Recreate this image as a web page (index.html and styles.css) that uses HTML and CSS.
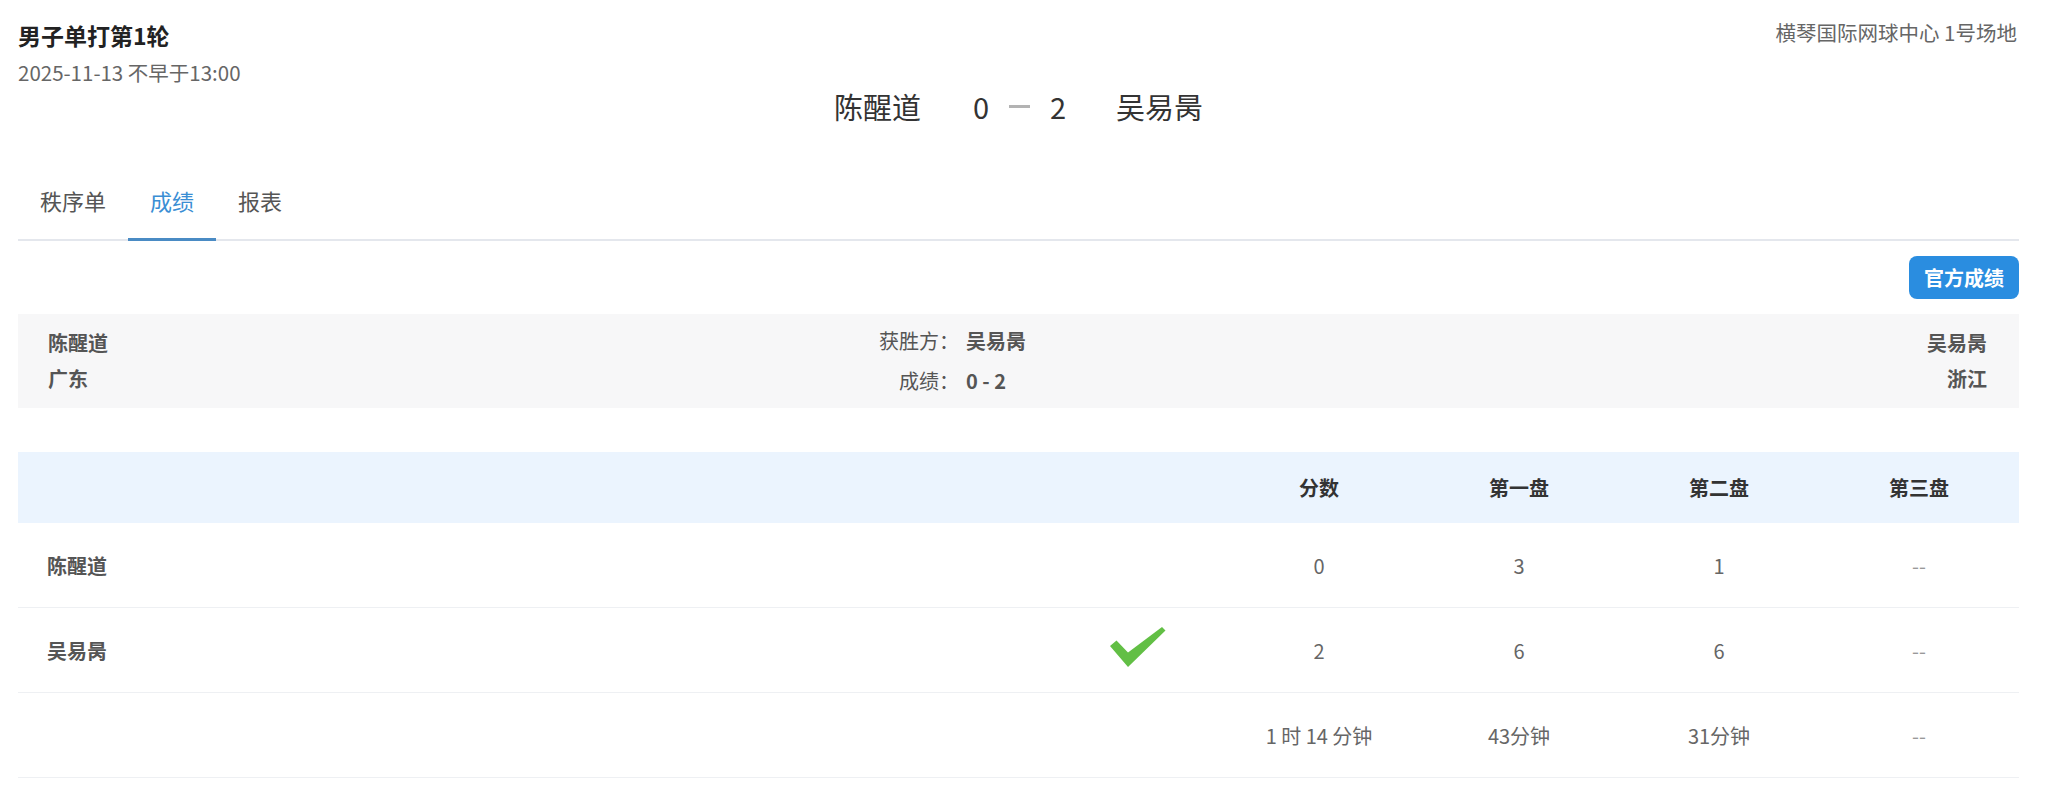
FILE: index.html
```html
<!DOCTYPE html>
<html lang="zh-CN">
<head>
<meta charset="utf-8">
<title>男子单打第1轮</title>
<link rel="stylesheet" href="styles.css">
</head>
<body>
<div class="page">
  <header class="match-head">
    <div class="head-top">
      <div class="head-left">
        <h1 class="title">男子单打第1轮</h1>
        <div class="date">2025-11-13 不早于13:00</div>
      </div>
      <div class="venue">横琴国际网球中心 1号场地</div>
    </div>
    <div class="scoreline">
      <span class="player">陈醒道</span>
      <span class="score">0</span>
      <span class="dash"></span>
      <span class="score">2</span>
      <span class="player">吴易昺</span>
    </div>
  </header>

  <nav class="tabs">
    <div class="tab">秩序单</div>
    <div class="tab active">成绩</div>
    <div class="tab">报表</div>
  </nav>

  <div class="toolbar">
    <button class="btn-primary">官方成绩</button>
  </div>

  <section class="info">
    <div class="side left">
      <div>陈醒道</div>
      <div>广东</div>
    </div>
    <div class="middle">
      <span class="label">获胜方：</span><span class="value">吴易昺</span>
      <span class="label">成绩：</span><span class="value">0 - 2</span>
    </div>
    <div class="side right">
      <div>吴易昺</div>
      <div>浙江</div>
    </div>
  </section>

  <section class="table">
    <div class="tr thead">
      <div class="td name"></div>
      <div class="td check"></div>
      <div class="td">分数</div>
      <div class="td">第一盘</div>
      <div class="td">第二盘</div>
      <div class="td">第三盘</div>
    </div>
    <div class="tr">
      <div class="td name">陈醒道</div>
      <div class="td check"></div>
      <div class="td">0</div>
      <div class="td">3</div>
      <div class="td">1</div>
      <div class="td empty">--</div>
    </div>
    <div class="tr">
      <div class="td name">吴易昺</div>
      <div class="td check">
        <svg class="check-icon" width="57" height="42" viewBox="0 0 57 42" aria-hidden="true">
          <path d="M1 20 L7.5 14.5 L19 26.5 L53 1 L56.5 4.5 L19 41 Z" fill="#62bf45"/>
        </svg>
      </div>
      <div class="td">2</div>
      <div class="td">6</div>
      <div class="td">6</div>
      <div class="td empty">--</div>
    </div>
    <div class="tr">
      <div class="td name"></div>
      <div class="td check"></div>
      <div class="td">1 时 14 分钟</div>
      <div class="td">43分钟</div>
      <div class="td">31分钟</div>
      <div class="td empty">--</div>
    </div>
  </section>
</div>
</body>
</html>
```

FILE: styles.css
```css
* {
  box-sizing: border-box;
}

html, body {
  margin: 0;
  padding: 0;
  background: #ffffff;
}

body {
  font-family: "Noto Sans CJK SC", "Noto Sans", sans-serif;
  font-size: 20px;
  color: #333333;
}

.page {
  padding: 20px 29px 0 18px;
}

/* header */
.head-top {
  display: flex;
  justify-content: space-between;
  align-items: flex-start;
}

.title {
  margin: 0;
  font-size: 23px;
  line-height: 30px;
  font-weight: 700;
  color: #222222;
}

.date {
  margin-top: 8px;
  font-size: 20.5px;
  line-height: 28px;
  color: #666666;
}

.venue {
  font-size: 20.5px;
  line-height: 24px;
  color: #666666;
  padding-right: 2px;
}

.scoreline {
  display: flex;
  justify-content: center;
  align-items: center;
  height: 40px;
  font-size: 29px;
  line-height: 40px;
  color: #333333;
}

.scoreline .player:first-child {
  margin-right: 52px;
}

.scoreline .player:last-child {
  margin-left: 50px;
}

.scoreline .dash {
  display: block;
  width: 21px;
  height: 3px;
  margin: 0 20px;
  background: #b3b3b3;
}

/* tabs */
.tabs {
  display: flex;
  align-items: flex-start;
  margin-top: 49px;
  border-bottom: 2px solid #e4e7ed;
}

.tab {
  padding: 0 22px 14px;
  font-size: 22px;
  line-height: 50px;
  color: #555555;
}

.tab.active {
  color: #3a8ed4;
  padding-bottom: 13px;
  border-bottom: 3px solid #4a8bc4;
  margin-bottom: -2px;
}

/* toolbar */
.toolbar {
  display: flex;
  justify-content: flex-end;
  margin-top: 15px;
}

.btn-primary {
  height: 43px;
  padding: 0 15px;
  border: none;
  border-radius: 8px;
  background: #2a8de0;
  color: #ffffff;
  font-family: inherit;
  font-size: 20px;
  font-weight: 700;
  line-height: 43px;
}

/* info box */
.info {
  display: grid;
  grid-template-columns: 831px auto 1fr;
  align-items: center;
  height: 94px;
  margin-top: 15px;
  padding: 0 32px 0 30px;
  background: #f7f7f8;
  color: #555555;
}

.side {
  font-weight: 700;
  line-height: 36px;
}

.side.right {
  text-align: right;
}

.middle {
  display: grid;
  grid-template-columns: auto auto;
  line-height: 40px;
}

.middle .label {
  text-align: right;
  color: #555555;
}

.middle .value {
  margin-left: 7px;
  font-weight: 700;
}

/* score table */
.table {
  margin-top: 44px;
}

.tr {
  display: grid;
  grid-template-columns: 1fr 160px 200px 200px 200px 200px;
  align-items: center;
  height: 85px;
  border-bottom: 1px solid #eef0f3;
  color: #666666;
}

.tr.thead {
  height: 71px;
  background: #ebf4fe;
  border-bottom: none;
  color: #333333;
  font-weight: 700;
}

.td {
  text-align: center;
}

.td.name {
  text-align: left;
  padding-left: 29px;
  font-weight: 700;
  color: #555555;
}

.td.check {
  display: flex;
  justify-content: center;
  align-items: center;
}

.check-icon {
  display: block;
  margin-top: -6px;
  margin-left: -3px;
}

.td.empty {
  color: #999999;
}
```
